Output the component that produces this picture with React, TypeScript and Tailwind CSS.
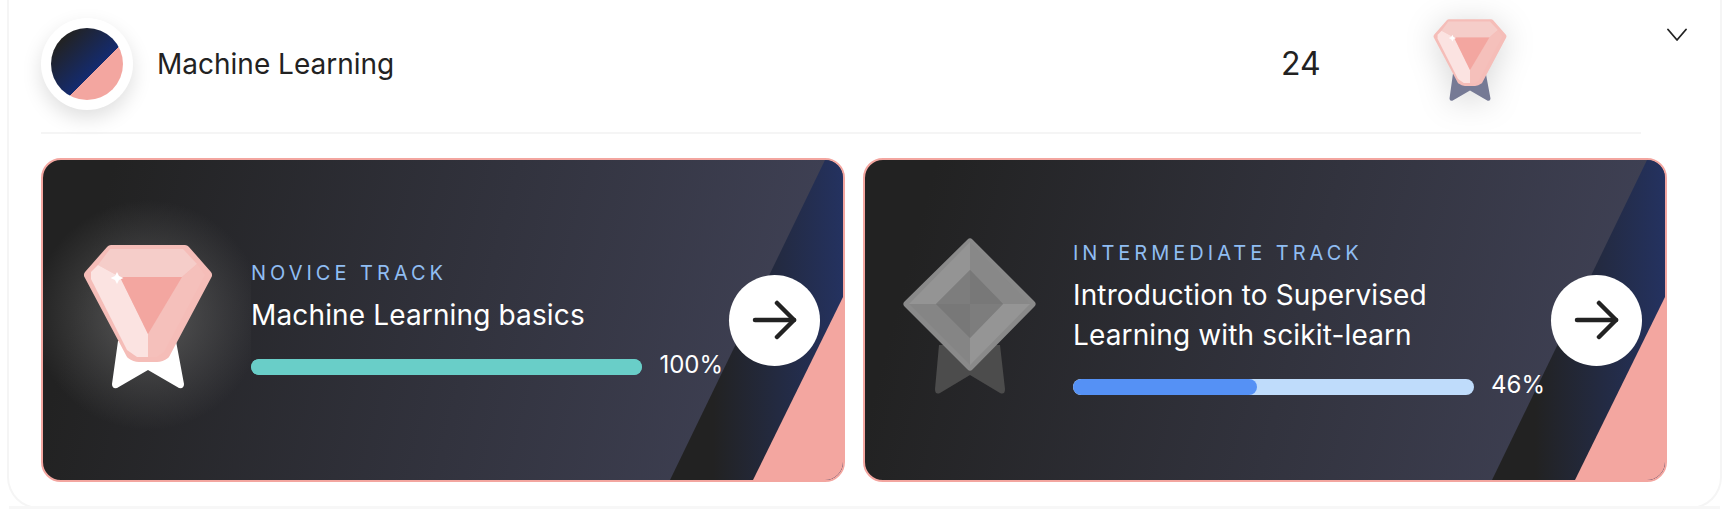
const inter = "font-['Inter','Liberation_Sans',sans-serif]";

function PinkBadge({ ribbon, className }: { ribbon: string; className?: string }) {
  return (
    <svg viewBox="-1 -1 130 147" className={className}>
      <path d="M34 97 L28 140 Q28 145 33 144 L64 126 L95 144 Q100 145 100 140 L92 97 Z" fill={ribbon} />
      <path
        d="M27 6 H101 L123 31 L81 110 Q77 113 73 113 H55 Q51 113 47 110 L5 31 Z"
        fill="#f5bdb8"
        stroke="#f5bdb8"
        strokeWidth="10"
        strokeLinejoin="round"
      />
      <path d="M14 21 L26 5 H99 L113 20 L98 33 H36 Z" fill="#f5cdc9" />
      <path d="M14 21 L36 33 L64 90 V113 H53 L43 106 L7 35 V28 Z" fill="#fbe3e1" />
      <path d="M98 33 L113 20 L121 31 L80 108 L73 113 H64 V90 Z" fill="#f5c0bb" />
      <path d="M36 33 H98 L64 90 Z" fill="#f3a6a0" />
      <path d="M33 28 L35 32 L39.5 34 L35 36 L33 40 L31 36 L26.5 34 L31 32 Z" fill="#ffffff" />
    </svg>
  );
}

function GrayBadge({ className }: { className?: string }) {
  return (
    <svg viewBox="-1 -1 136 158" className={className}>
      <path d="M36 107 L32 151 Q32 157 37 155 L67 137 L97 155 Q102 157 102 151 L97 107 Z" fill="#4c4c4c" />
      <path d="M67 4 L129 66 L67 129 L4 66 Z" fill="#8a8a8a" stroke="#8a8a8a" strokeWidth="7" strokeLinejoin="round" />
      <path d="M67 4 V32 L33 66 H6 Z" fill="#949494" />
      <path d="M67 4 L127 66 H100 L67 32 Z" fill="#888888" />
      <path d="M6 66 H33 L67 100 V127 Z" fill="#858585" />
      <path d="M127 66 L67 127 V100 L100 66 Z" fill="#959595" />
      <path d="M67 32 L100 66 L67 100 L33 66 Z" fill="#7d7d7d" />
      <path d="M67 32 L100 66 H67 Z" fill="#787878" />
      <path d="M67 100 L33 66 H67 Z" fill="#787878" />
    </svg>
  );
}

function CardStripes({ id }: { id: string }) {
  return (
    <svg viewBox="0 0 800 320" className="absolute inset-0 h-full w-full">
      <defs>
        <linearGradient id={id} gradientUnits="userSpaceOnUse" x1="670" y1="0" x2="800" y2="0">
          <stop offset="0" stopColor="#222222" />
          <stop offset="1" stopColor="#243260" />
        </linearGradient>
      </defs>
      <polygon points="782,0 800,0 800,320 627,320" fill={`url(#${id})`} />
      <polygon points="710,320 800,137 800,320" fill="#f3a6a0" />
    </svg>
  );
}

function TrackCard({
  id,
  label,
  title,
  percent,
  fill,
  track,
  glow,
  badge,
}: {
  id: string;
  label: string;
  title: string[];
  percent: number;
  fill: string;
  track: string;
  glow?: boolean;
  badge: React.ReactNode;
}) {
  return (
    <div className="relative flex h-[324px] items-center overflow-hidden rounded-[20px] border-2 border-[#f3a6a0] bg-[linear-gradient(105deg,#222222_0%,#222222_8%,#42445a_100%)]">
      <CardStripes id={id} />
      <div
        className={`relative flex h-full w-[208px] shrink-0 items-center justify-center pb-2 pl-[1px] ${
          glow ? "bg-[radial-gradient(circle_at_105px_155px,rgba(88,88,88,1)_0%,rgba(88,88,88,0)_115px)]" : ""
        }`}
      >
        {badge}
      </div>
      <div className="relative min-w-0 flex-1 pt-[5px]">
        <div className="text-[20px] leading-[24px] tracking-[0.2em] text-[#90bdf2]">{label}</div>
        <div className="mt-[10px] text-[28px] leading-[40px] tracking-[0.005em] text-white">
          {title.map((line) => (
            <div key={line}>{line}</div>
          ))}
        </div>
        <div className="mt-[15px] flex items-center gap-[17px]">
          <div className="h-4 flex-1 overflow-hidden rounded-full" style={{ background: track }}>
            <div className="h-full rounded-full" style={{ width: `${percent}%`, background: fill }} />
          </div>
          <span className="pb-1 text-[24px] leading-[30px] text-white">{percent}%</span>
        </div>
      </div>
      <button className="relative ml-[6px] mr-[23px] flex h-[91px] w-[91px] shrink-0 items-center justify-center rounded-full bg-white">
        <svg viewBox="0 0 46 40" className="h-[40px] w-[46px]" fill="none" stroke="#222222" strokeWidth="4.5" strokeLinecap="round" strokeLinejoin="round">
          <path d="M3 20 H42" />
          <path d="M25 3 L42 20 L25 37" />
        </svg>
      </button>
    </div>
  );
}

export default function App() {
  return (
    <div className={`${inter} h-[510px] w-[1730px] overflow-hidden bg-white text-[#222222]`}>
      <div className="ml-[7px] h-[509px] w-[1715px] rounded-b-[32px] border-x-2 border-b-2 border-[#f5f5f5] pl-[32px]">
        <div className="flex items-start gap-[26px]">
          <div className="flex h-[134px] w-[1600px] items-center border-b-2 border-[#f5f5f5] pb-[4px]">
            <div className="flex h-[92px] w-[92px] items-center justify-center rounded-full bg-white shadow-[0_8px_20px_rgba(0,0,0,0.13)]">
              <div className="h-[72px] w-[72px] rounded-full bg-[linear-gradient(135deg,#222222_15%,#142b6f_60%,#f3a6a0_60%)]" />
            </div>
            <div className="ml-[24px] flex-1 text-[28px]">Machine Learning</div>
            <div className="w-[152px] text-[32px]">24</div>
            <PinkBadge
              ribbon="#767a95"
              className="mb-2 mr-[134px] h-[84px] w-[74px] drop-shadow-[0_4px_16px_rgba(0,0,0,0.16)]"
            />
          </div>
          <svg viewBox="0 0 20 13" className="mt-[28px] h-[13px] w-[20px]" fill="none" stroke="#222222" strokeWidth="1.8" strokeLinecap="round" strokeLinejoin="round">
            <path d="M1 1.5 L10 12 L19 1.5" />
          </svg>
        </div>
        <div className="mt-[24px] grid grid-cols-[804px_804px] gap-[18px]">
          <TrackCard
            id="band-novice"
            label="NOVICE TRACK"
            title={["Machine Learning basics"]}
            percent={100}
            fill="#69cec8"
            track="#69cec8"
            glow
            badge={<PinkBadge ribbon="#ffffff" className="h-[147px] w-[130px]" />}
          />
          <TrackCard
            id="band-intermediate"
            label="INTERMEDIATE TRACK"
            title={["Introduction to Supervised", "Learning with scikit-learn"]}
            percent={46}
            fill="#5591f5"
            track="#bfdcfb"
            badge={<GrayBadge className="h-[158px] w-[136px]" />}
          />
        </div>
        <div className="-ml-[32px] mt-[24px] h-[3px] bg-[#f7f7f7]" />
      </div>
    </div>
  );
}
